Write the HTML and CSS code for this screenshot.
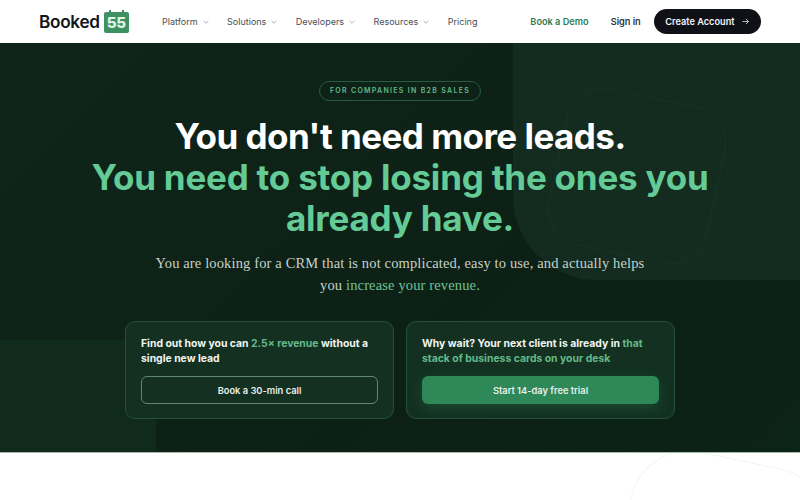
FILE: index.html
```html
<!DOCTYPE html>
<html lang="en">
<head>
<meta charset="utf-8">
<title>Booked55</title>
<link rel="stylesheet" href="styles.css">
</head>
<body>
<header class="topbar">
  <a class="brand" href="#">
    <span class="brand-name">Booked</span>
    <span class="brand-badge"><span class="ring ring-l"></span><span class="ring ring-r"></span>55</span>
  </a>
  <nav class="nav">
    <a class="nav-item" href="#">Platform <svg class="chev" viewBox="0 0 10 10"><path d="M2 3.5l3 3 3-3"/></svg></a>
    <a class="nav-item" href="#">Solutions <svg class="chev" viewBox="0 0 10 10"><path d="M2 3.5l3 3 3-3"/></svg></a>
    <a class="nav-item" href="#">Developers <svg class="chev" viewBox="0 0 10 10"><path d="M2 3.5l3 3 3-3"/></svg></a>
    <a class="nav-item" href="#">Resources <svg class="chev" viewBox="0 0 10 10"><path d="M2 3.5l3 3 3-3"/></svg></a>
    <a class="nav-item" href="#">Pricing</a>
  </nav>
  <div class="actions">
    <a class="demo" href="#">Book a Demo</a>
    <a class="signin" href="#">Sign in</a>
    <a class="create" href="#">Create Account <svg class="arrow" viewBox="0 0 12 12"><path d="M2 6h8M6.5 2.500L10 6l-3.500 3.500"/></svg></a>
  </div>
</header>
<main class="hero">
  <div class="deco deco-tr"></div>
  <div class="deco deco-bl"></div>
  <div class="deco deco-ring"></div>
  <div class="hero-inner">
    <span class="pill">FOR COMPANIES IN B2B SALES</span>
    <h1 class="title"><span class="title-first">You don't need more leads.</span><br><span class="accent">You need to stop losing the ones you already have.</span></h1>
    <p class="lead">You are looking for a CRM that is not complicated, easy to use, and actually helps you <span class="lead-accent">increase your revenue.</span></p>
    <div class="cards">
      <section class="card">
        <p class="card-text">Find out how you can <span class="hl">2.5× revenue</span> without a single new lead</p>
        <a class="btn btn-outline" href="#">Book a 30-min call</a>
      </section>
      <section class="card">
        <p class="card-text">Why wait? Your next client is already in <span class="hl">that stack of business cards on your desk</span></p>
        <a class="btn btn-solid" href="#">Start 14-day free trial</a>
      </section>
    </div>
  </div>
</main>
<div class="below"><div class="deco-ring-light"></div></div>
</body>
</html>
```
FILE: styles.css
```css
* { box-sizing: border-box; }
html, body { margin: 0; padding: 0; height: 100%; overflow: hidden; }
body { background: #fff; font-family: "Inter", "Liberation Sans", sans-serif; }
a { text-decoration: none; color: inherit; }

.topbar { height: 43px; display: flex; align-items: center; padding: 0 39px; background: #fff; }
.brand { display: flex; align-items: center; gap: 4px; width: 123px; }
.brand-name { font-size: 17.200px; font-weight: 600; color: #14151a; letter-spacing: -0.3px; }
.brand-badge { position: relative; width: 25px; height: 21px; margin-top: 2px; background: #3d9163; border-radius: 2px; color: #e3f5e9; font-size: 15px; font-weight: 800; text-align: center; line-height: 21px; letter-spacing: -0.3px; }
.ring { position: absolute; top: -2px; width: 2px; height: 4px; background: #3d9163; }
.ring-l { left: 5px; }
.ring-r { right: 5px; }
.nav { display: flex; gap: 17.500px; font-size: 9px; color: #4a4d55; font-weight: 400; }
.nav-item { display: flex; align-items: center; gap: 4px; }
.chev { width: 8px; height: 8px; fill: none; stroke: #9a9da3; stroke-width: 1; }
.actions { margin-left: auto; display: flex; align-items: center; font-size: 9.200px; font-weight: 600; }
.demo { color: #2e7d50; margin-right: 22px; }
.signin { color: #2f3238; margin-right: 13px; }
.create { display: flex; align-items: center; gap: 6px; height: 25px; padding: 0 11.500px; background: #101116; color: #f5f5f5; border-radius: 13px; }
.arrow { width: 9px; height: 9px; fill: none; stroke: #f5f5f5; stroke-width: 1; }

.hero { position: relative; height: 410px; overflow: hidden; background: linear-gradient(135deg, #0f251a 0%, #0d2016 60%, #0c2317 100%); border-bottom: 1px solid #a9b8ae; }
.deco { position: absolute; pointer-events: none; }
.deco-tr { left: 513px; top: -60px; width: 420px; height: 297px; background: #132c1f; border-radius: 0 0 0 84px; }
.deco-bl { left: 0; top: 297px; width: 156px; height: 113px; background: #102a1c; border-radius: 0 8px 0 0; }
.deco-ring { left: 556px; top: 53px; width: 162px; height: 160px; border: 1px solid #193326; border-radius: 36px; transform: rotate(12deg); }

.hero-inner { position: relative; display: flex; flex-direction: column; align-items: center; padding-top: 38px; }
.pill { display: block; height: 20px; padding: 0 10px; border: 1px solid #2a5a41; border-radius: 10px; font-size: 7px; font-weight: 600; line-height: 18px; letter-spacing: 1.300px; color: #63b98a; }
.title { margin: 15px 0 0; width: 640px; text-align: center; font-size: 35px; line-height: 41px; font-weight: 700; color: #fff; }
.title-first { letter-spacing: -0.530px; }
.accent { color: #64cb96; letter-spacing: -0.220px; }
.lead { margin: 13px 0 0; width: 500px; text-align: center; font-family: "Liberation Serif", serif; font-size: 14.500px; line-height: 22px; letter-spacing: 0.140px; color: #c5d2ca; }
.lead-accent { color: #6fc394; }
.cards { display: flex; gap: 12px; margin-top: 25px; }
.card { width: 269px; height: 98px; padding: 14px 15px; background: #133021; border: 1px solid #245139; border-radius: 10px; display: flex; flex-direction: column; }
.card-text { margin: 0; font-size: 10.400px; line-height: 15px; font-weight: 700; color: #f1f5f2; }
.hl { color: #63b98a; }
.btn { margin-top: auto; height: 28px; display: flex; align-items: center; justify-content: center; border-radius: 6px; font-size: 9.300px; font-weight: 600; color: #e9efeb; }
.btn-outline { border: 1px solid #5f8872; }
.btn-solid { background: #2f8858; box-shadow: 0 4px 14px rgba(47,136,88,.3); }

.below { position: relative; height: 47px; overflow: hidden; }
.deco-ring-light { position: absolute; left: 620px; top: 5px; width: 200px; height: 200px; border: 1px solid #f1f6f3; border-radius: 60px; transform: rotate(12deg); }
```
